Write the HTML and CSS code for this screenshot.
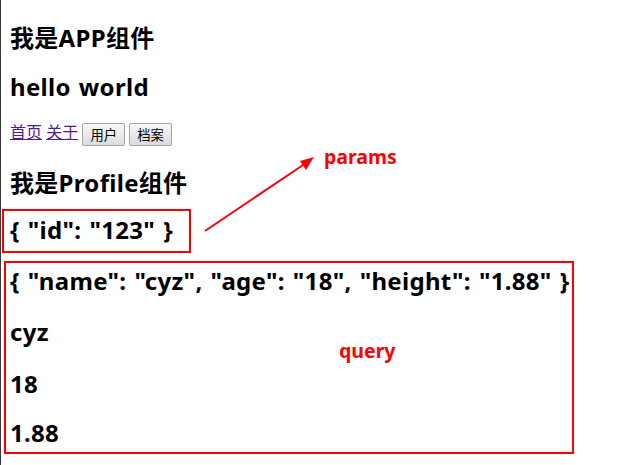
FILE: index.html
```html
<!DOCTYPE html>
<html lang="zh">
<head>
<meta charset="utf-8">
<title>Vue Router demo</title>
<link rel="stylesheet" href="styles.css">
</head>
<body>
<div class="app">
  <h3 class="title">我是APP组件</h3>
  <h2 class="hello">hello world</h2>
  <div class="nav">
    <a href="#/home" class="link">首页</a>
    <a href="#/about" class="link">关于</a>
    <button class="btn">用户</button>
    <button class="btn">档案</button>
  </div>
  <div class="profile">
    <h3 class="ptitle">我是Profile组件</h3>
    <h2 class="pid">{ "id": "123" }</h2>
    <h2 class="pjson">{ "name": "cyz", "age": "18", "height": "1.88" }</h2>
    <h2 class="pcyz">cyz</h2>
    <h2 class="p18">18</h2>
    <h2 class="p188">1.88</h2>
  </div>
</div>
<div class="annot">
  <div class="box box-params"></div>
  <div class="box box-query"></div>
  <svg class="arrow" width="628" height="465" viewBox="0 0 628 465">
    <line x1="205" y1="231" x2="306" y2="163" stroke="#ff0000" stroke-width="2"/>
    <polygon points="314,157 300,161 306,170" fill="#ff0000"/>
  </svg>
  <span class="label label-params">params</span>
  <span class="label label-query">query</span>
</div>
</body>
</html>
```
FILE: styles.css
```css
html {
  border-left: 1px solid #3a3a3a;
  min-height: 100%;
  box-sizing: border-box;
}
body {
  margin: 8px;
  margin-left: 9px;
  font-family: "Noto Sans", "Noto Sans CJK SC", sans-serif;
  color: #000;
  line-height: 1.32;
}
h2, h3 {
  font-size: 24px;
  font-weight: bold;
  margin: 0;
  letter-spacing: 0.3px;
  word-spacing: 1.5px;
}
.title { margin-top: 13.5px; }
.hello { margin-top: 17.6px; }
.nav {
  margin-top: 19.9px;
  font-size: 16px;
  line-height: 21px;
}
.ptitle { margin-top: 21px; }
.pid { margin-top: 15.5px; }
.pjson { margin-top: 19.3px; }
.pcyz { margin-top: 19.8px; }
.p18 { margin-top: 19.8px; }
.p188 { margin-top: 17.9px; }
.link {
  color: #551a8b;
  text-decoration: underline;
}
.btn {
  font-family: "Noto Sans CJK SC", sans-serif;
  font-size: 13.33px;
  line-height: 17px;
  padding: 2px 7px;
  border: 1px solid #a6a6a6;
  border-radius: 2px;
  background: linear-gradient(#f8f8f8, #dcdcdc);
  color: #000;
  vertical-align: middle;
}
.annot {
  position: absolute;
  left: 0;
  top: 0;
  width: 628px;
  height: 465px;
  pointer-events: none;
}
.box {
  position: absolute;
  border: 2px solid #ff0000;
}
.box-params {
  left: 2px;
  top: 209px;
  width: 185px;
  height: 40px;
}
.box-query {
  left: 4px;
  top: 261px;
  width: 566px;
  height: 189px;
}
.arrow {
  position: absolute;
  left: 0;
  top: 0;
}
.label {
  position: absolute;
  color: #ff0000;
  font-family: "Noto Sans", sans-serif;
  font-weight: bold;
  font-size: 19.5px;
  line-height: 24px;
}
.label-params {
  left: 324px;
  top: 145px;
}
.label-query {
  left: 339px;
  top: 339px;
}
```
